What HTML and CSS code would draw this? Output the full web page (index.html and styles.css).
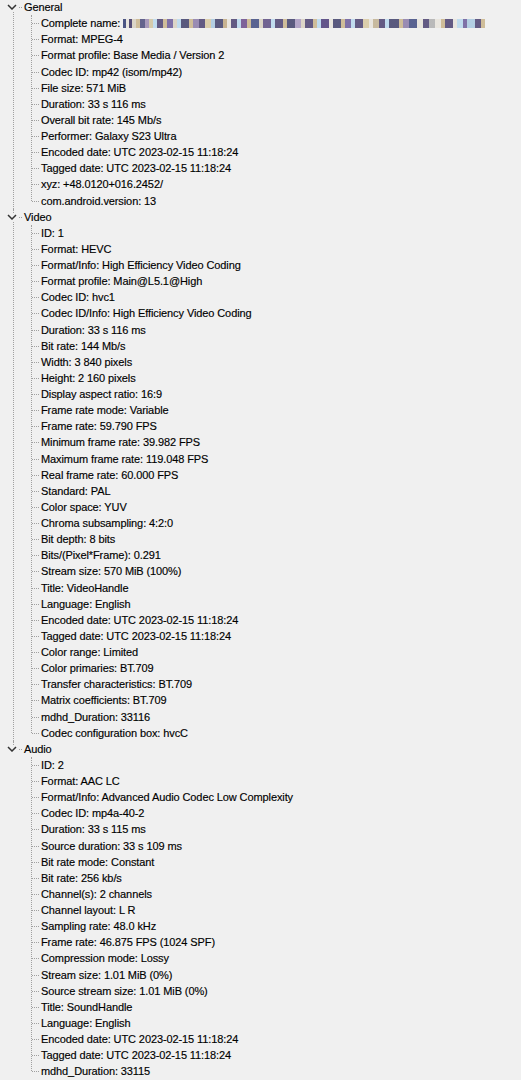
FILE: index.html
```html
<!DOCTYPE html>
<html>
<head>
<meta charset="utf-8">
<link rel="stylesheet" href="styles.css">
</head>
<body>
<div class="tree">
  <div class="node">
    <div class="row"><svg class="chev" width="10" height="6" viewBox="0 0 10 6"><polyline points="1,1 5,5 9,1" fill="none" stroke="#333333" stroke-width="1.5"/></svg><span class="label">General</span></div>
    <ul class="kids">
      <li>Complete name: <span class="redact"></span></li>
      <li>Format: MPEG-4</li>
      <li>Format profile: Base Media / Version 2</li>
      <li>Codec ID: mp42 (isom/mp42)</li>
      <li>File size: 571 MiB</li>
      <li>Duration: 33 s 116 ms</li>
      <li>Overall bit rate: 145 Mb/s</li>
      <li>Performer: Galaxy S23 Ultra</li>
      <li>Encoded date: UTC 2023-02-15 11:18:24</li>
      <li>Tagged date: UTC 2023-02-15 11:18:24</li>
      <li>xyz: +48.0120+016.2452/</li>
      <li>com.android.version: 13</li>
    </ul>
  </div>
  <div class="node">
    <div class="row"><svg class="chev" width="10" height="6" viewBox="0 0 10 6"><polyline points="1,1 5,5 9,1" fill="none" stroke="#333333" stroke-width="1.5"/></svg><span class="label">Video</span></div>
    <ul class="kids">
      <li>ID: 1</li>
      <li>Format: HEVC</li>
      <li>Format/Info: High Efficiency Video Coding</li>
      <li>Format profile: Main@L5.1@High</li>
      <li>Codec ID: hvc1</li>
      <li>Codec ID/Info: High Efficiency Video Coding</li>
      <li>Duration: 33 s 116 ms</li>
      <li>Bit rate: 144 Mb/s</li>
      <li>Width: 3 840 pixels</li>
      <li>Height: 2 160 pixels</li>
      <li>Display aspect ratio: 16:9</li>
      <li>Frame rate mode: Variable</li>
      <li>Frame rate: 59.790 FPS</li>
      <li>Minimum frame rate: 39.982 FPS</li>
      <li>Maximum frame rate: 119.048 FPS</li>
      <li>Real frame rate: 60.000 FPS</li>
      <li>Standard: PAL</li>
      <li>Color space: YUV</li>
      <li>Chroma subsampling: 4:2:0</li>
      <li>Bit depth: 8 bits</li>
      <li>Bits/(Pixel*Frame): 0.291</li>
      <li>Stream size: 570 MiB (100%)</li>
      <li>Title: VideoHandle</li>
      <li>Language: English</li>
      <li>Encoded date: UTC 2023-02-15 11:18:24</li>
      <li>Tagged date: UTC 2023-02-15 11:18:24</li>
      <li>Color range: Limited</li>
      <li>Color primaries: BT.709</li>
      <li>Transfer characteristics: BT.709</li>
      <li>Matrix coefficients: BT.709</li>
      <li>mdhd_Duration: 33116</li>
      <li>Codec configuration box: hvcC</li>
    </ul>
  </div>
  <div class="node last">
    <div class="row"><svg class="chev" width="10" height="6" viewBox="0 0 10 6"><polyline points="1,1 5,5 9,1" fill="none" stroke="#333333" stroke-width="1.5"/></svg><span class="label">Audio</span></div>
    <ul class="kids">
      <li>ID: 2</li>
      <li>Format: AAC LC</li>
      <li>Format/Info: Advanced Audio Codec Low Complexity</li>
      <li>Codec ID: mp4a-40-2</li>
      <li>Duration: 33 s 115 ms</li>
      <li>Source duration: 33 s 109 ms</li>
      <li>Bit rate mode: Constant</li>
      <li>Bit rate: 256 kb/s</li>
      <li>Channel(s): 2 channels</li>
      <li>Channel layout: L R</li>
      <li>Sampling rate: 48.0 kHz</li>
      <li>Frame rate: 46.875 FPS (1024 SPF)</li>
      <li>Compression mode: Lossy</li>
      <li>Stream size: 1.01 MiB (0%)</li>
      <li>Source stream size: 1.01 MiB (0%)</li>
      <li>Title: SoundHandle</li>
      <li>Language: English</li>
      <li>Encoded date: UTC 2023-02-15 11:18:24</li>
      <li>Tagged date: UTC 2023-02-15 11:18:24</li>
      <li>mdhd_Duration: 33115</li>
    </ul>
  </div>
</div>
</body>
</html>
```

FILE: styles.css
```css
html, body {
  margin: 0;
  padding: 0;
  background: #f0f0f0;
}

.tree {
  margin-top: -1px;
  font-family: "Liberation Sans", Arial, sans-serif;
  font-size: 11px;
  letter-spacing: -0.1px;
  color: #000;
  -webkit-text-stroke: 0.15px #000;
}

.node {
  position: relative;
}

.node::before {
  content: "";
  position: absolute;
  left: 13px;
  top: 0;
  bottom: 0;
  border-left: 1px dotted #a0a0a0;
}

.node:first-child::before {
  top: 8px;
}

.node.last::before {
  bottom: auto;
  height: 8px;
}

.row {
  position: relative;
  height: 16.13px;
  display: flex;
  align-items: center;
}

.row::after {
  content: "";
  position: absolute;
  left: 14px;
  width: 8px;
  top: 8px;
  border-top: 1px dotted #a0a0a0;
}

.chev {
  position: relative;
  z-index: 1;
  margin-left: 7px;
  background: #f0f0f0;
  box-shadow: 0 0 0 1px #f0f0f0;
}

.label {
  margin-left: 7px;
  position: relative;
  z-index: 1;
}

.kids {
  list-style: none;
  margin: 0;
  padding: 0 0 0 41px;
  position: relative;
}

.kids::before {
  content: "";
  position: absolute;
  left: 31px;
  top: 0;
  bottom: 8px;
  border-left: 1px dotted #a0a0a0;
}

.kids li {
  position: relative;
  height: 16.13px;
  line-height: 16.13px;
  white-space: nowrap;
}

.kids li::before {
  content: "";
  position: absolute;
  left: -9px;
  width: 7px;
  top: 8px;
  border-top: 1px dotted #a0a0a0;
}

.redact {
  display: inline-block;
  width: 362px;
  height: 9px;
  vertical-align: -1px;
  opacity: 0.85;
  background:
    linear-gradient(90deg,
      #2f3a70 0 3px, #e8e4dc 3px 6px, #3a3060 6px 9px, #d8d0c0 9px 13px,
      #c9b48a 13px 17px, #4a4a7a 17px 22px, #9b8ab0 22px 26px, #d0c4a0 26px 30px,
      #b8d8ee 30px 34px, #4a4070 34px 40px, #c9b48a 40px 44px, #6a5a9a 44px 50px,
      #d8d0c0 50px 54px, #b8d8ee 54px 58px, #3f3f6a 58px 66px, #c9b48a 66px 70px,
      #8a7aa8 70px 76px, #4a4070 76px 82px, #d8c8a0 82px 88px, #a8c8e0 88px 92px,
      #3f3f6a 92px 100px, #c0a880 100px 104px, #e8e4dc 104px 108px, #4a4070 108px 114px,
      #b8d8ee 114px 118px, #6a4a8a 118px 124px, #c9b48a 124px 128px, #3f4a80 128px 136px,
      #d8d0c0 136px 140px, #5a4a80 140px 148px, #b8d8ee 148px 152px, #4a4070 152px 160px,
      #c9b48a 160px 164px, #3f3f6a 164px 172px, #a898c0 172px 178px, #d8d0c0 178px 182px,
      #4a4070 182px 190px, #c9b48a 190px 194px, #b8d8ee 194px 198px, #4a3a78 198px 206px,
      #e8e4dc 206px 210px, #3f3f6a 210px 218px, #c9b48a 218px 222px, #6a5a9a 222px 228px,
      #b8d8ee 228px 232px, #4a4070 232px 240px, #d8c8a0 240px 246px, #e8e4dc 246px 250px,
      #c0b090 250px 256px, #4a4070 256px 262px, #b8d8ee 262px 266px, #3f3f6a 266px 276px,
      #c9b48a 276px 280px, #8a7aa8 280px 286px, #3f4a80 286px 294px, #e8e4dc 294px 300px,
      #4a4070 300px 306px, #b0b0b0 306px 312px, #e8e4dc 312px 318px, #c9b48a 318px 322px,
      #4a4070 322px 330px, #e8e4dc 330px 334px, #b8d8ee 334px 340px, #6a5a9a 340px 344px,
      #a8c8e0 344px 352px, #4a4070 352px 358px, #c9b48a 358px 362px);
}
```
